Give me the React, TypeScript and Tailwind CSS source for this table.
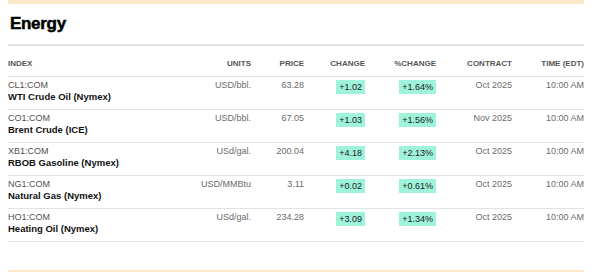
import React from 'react';

interface Quote {
  code: string;
  name: string;
  units: string;
  price: string;
  change: string;
  pct: string;
  contract: string;
  time: string;
}

const quotes: Quote[] = [
  { code: 'CL1:COM', name: 'WTI Crude Oil (Nymex)', units: 'USD/bbl.', price: '63.28', change: '+1.02', pct: '+1.64%', contract: 'Oct 2025', time: '10:00 AM' },
  { code: 'CO1:COM', name: 'Brent Crude (ICE)', units: 'USD/bbl.', price: '67.05', change: '+1.03', pct: '+1.56%', contract: 'Nov 2025', time: '10:00 AM' },
  { code: 'XB1:COM', name: 'RBOB Gasoline (Nymex)', units: 'USd/gal.', price: '200.04', change: '+4.18', pct: '+2.13%', contract: 'Oct 2025', time: '10:00 AM' },
  { code: 'NG1:COM', name: 'Natural Gas (Nymex)', units: 'USD/MMBtu', price: '3.11', change: '+0.02', pct: '+0.61%', contract: 'Oct 2025', time: '10:00 AM' },
  { code: 'HO1:COM', name: 'Heating Oil (Nymex)', units: 'USd/gal.', price: '234.28', change: '+3.09', pct: '+1.34%', contract: 'Oct 2025', time: '10:00 AM' },
];

const cols = 'grid grid-cols-[160px_83px_53px_61px_71px_76px_72px]';

const App: React.FC = () => {
  return (
    <div className="w-[600px] h-[272px] bg-white overflow-hidden" style={{ fontFamily: '"Liberation Sans", Arial, sans-serif' }}>
      <div className="ml-2 w-[576px]">
        {/* top band */}
        <div className="h-[4px] bg-[#fde7c9]" />

        {/* Title */}
        <div className="pt-[10px] pb-[10px] pl-[2px] border-b-2 border-[#e2e2e2]">
          <h1 className="text-[17px] leading-[20px] font-bold text-black tracking-[-0.3px] [-webkit-text-stroke:0.5px_black]">Energy</h1>
        </div>

        {/* Header */}
        <div className={`${cols} h-[31px] items-end pb-[7px] border-b border-[#e2e2e2] text-[8px] leading-[10px] font-bold text-[#555]`}>
          <div>INDEX</div>
          <div className="text-right">UNITS</div>
          <div className="text-right">PRICE</div>
          <div className="text-right">CHANGE</div>
          <div className="text-right">%CHANGE</div>
          <div className="text-right">CONTRACT</div>
          <div className="text-right">TIME (EDT)</div>
        </div>

        {/* Rows */}
        {quotes.map((q) => (
          <div key={q.code} className={`${cols} h-[33px] pt-[3px] border-b border-[#e2e2e2] text-[9px] text-[#6b6b6b]`}>
            <div>
              <div className="leading-[11px] text-[#505050]">{q.code}</div>
              <div className="leading-[11px] text-[9.5px] font-bold text-[#111]">{q.name}</div>
            </div>
            <div className="text-right leading-[11px]">{q.units}</div>
            <div className="text-right leading-[11px]">{q.price}</div>
            <div className="flex justify-end items-start">
              <span className="bg-[#9ff3da] text-[#1a1a1a] px-[3px] leading-[14px]">{q.change}</span>
            </div>
            <div className="flex justify-end items-start">
              <span className="bg-[#9ff3da] text-[#1a1a1a] px-[3px] leading-[14px]">{q.pct}</span>
            </div>
            <div className="text-right leading-[11px]">{q.contract}</div>
            <div className="text-right leading-[11px]">{q.time}</div>
          </div>
        ))}

        {/* bottom band */}
        <div className="mt-[28px] h-[4px] bg-[#fde7c9]" />
      </div>
    </div>
  );
};

export default App;
